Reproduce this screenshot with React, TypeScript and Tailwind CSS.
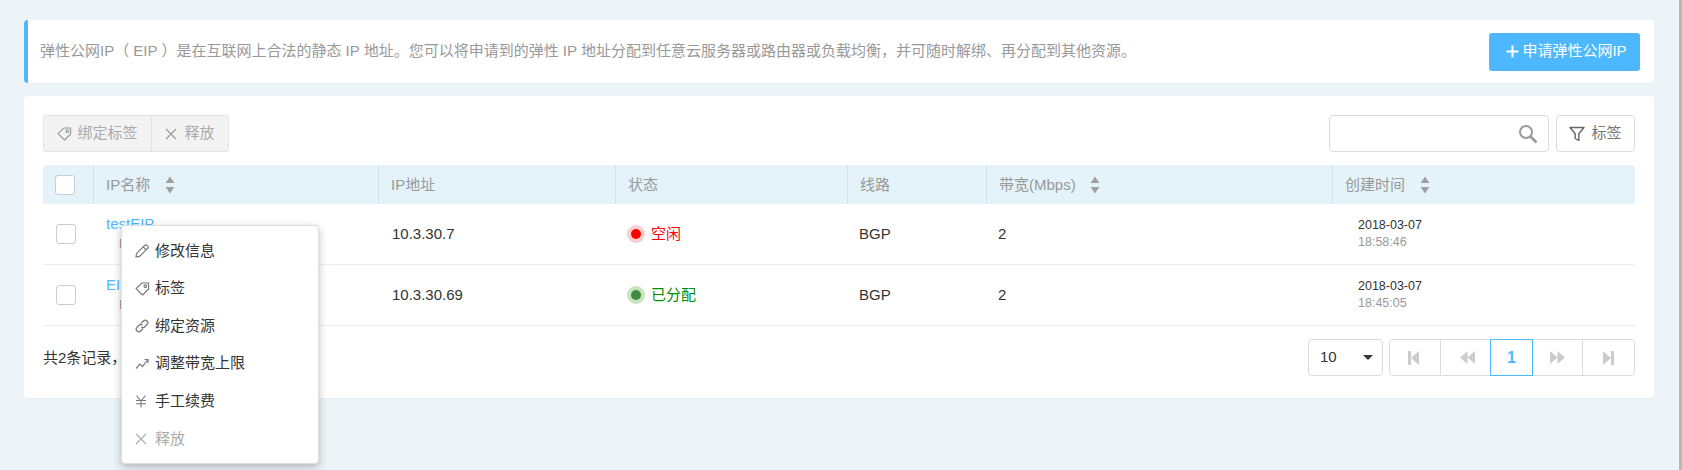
import React from "react";

const font = "font-['Liberation_Sans','Noto_Sans_CJK_SC',sans-serif]";

function Sort() {
  return (
    <svg width="10" height="18" viewBox="0 0 10 18" className="ml-[14.5px] shrink-0">
      <path d="M5 0.5L9.4 7H0.6Z M5 17.5L0.6 11H9.4Z" fill="#a0a0a0" />
    </svg>
  );
}

function Tag({ c = "#888" }: { c?: string }) {
  return (
    <svg width="15" height="15" viewBox="0 0 15 15" fill="none" stroke={c} strokeWidth="1.1">
      <path d="M1 7.6L7 2H13.6V8L7.6 14Z" strokeLinejoin="round" />
      <circle cx="10.3" cy="5.2" r="1.3" />
    </svg>
  );
}

function Cross({ c = "#999" }: { c?: string }) {
  return (
    <svg width="12" height="12" viewBox="0 0 12 12" fill="none" stroke={c} strokeWidth="1.1">
      <path d="M1 1L11 11M11 1L1 11" />
    </svg>
  );
}

const menu: { label: string; icon: React.ReactNode; off?: boolean }[] = [
  {
    label: "修改信息",
    icon: (
      <svg width="14" height="14" viewBox="0 0 14 14" fill="none" stroke="#777" strokeWidth="1.2">
        <path d="M1 13L1.6 9.4L9.4 1.6A1.5 1.5 0 0 1 12.4 4.6L4.6 12.4Z" strokeLinejoin="round" />
        <path d="M8.2 2.8L11.2 5.8" />
      </svg>
    ),
  },
  { label: "标签", icon: <Tag c="#777" /> },
  {
    label: "绑定资源",
    icon: (
      <svg width="14" height="14" viewBox="0 0 14 14" fill="none" stroke="#777" strokeWidth="1.3">
        <path d="M6 4.4L8.4 2A2.5 2.5 0 0 1 12 5.6L9.6 8A2.5 2.5 0 0 1 6.4 8" />
        <path d="M8 9.6L5.6 12A2.5 2.5 0 0 1 2 8.4L4.4 6A2.5 2.5 0 0 1 7.6 6" />
      </svg>
    ),
  },
  {
    label: "调整带宽上限",
    icon: (
      <svg width="14" height="12" viewBox="0 0 14 12" fill="none" stroke="#777" strokeWidth="1.2">
        <path d="M1 10.5L5 6L7.5 8.5L12.5 2" />
        <path d="M9.5 1.5H13V5" />
      </svg>
    ),
  },
  {
    label: "手工续费",
    icon: (
      <svg width="12" height="13" viewBox="0 0 12 13" fill="none" stroke="#777" strokeWidth="1.1">
        <path d="M1.5 0.5L6 6L10.5 0.5M6 6V12.5M1 5.5H11M1 8.8H11" />
      </svg>
    ),
  },
  { label: "释放", icon: <Cross c="#aaa" />, off: true },
];

const cols = [
  { label: "IP名称", sort: true },
  { label: "IP地址" },
  { label: "状态" },
  { label: "线路" },
  { label: "带宽(Mbps)", sort: true },
  { label: "创建时间", sort: true },
];

const rows = [
  { name: "testEIP", sub: "EIP-01", ip: "10.3.30.7", status: "空闲", on: false, time: "18:58:46" },
  { name: "EIP", sub: "EIP-02", ip: "10.3.30.69", status: "已分配", on: true, time: "18:45:05" },
];

const grid = "grid grid-cols-[50px_285px_237px_232px_139px_346px_303px]";

export default function App() {
  return (
    <div className={`${font} relative h-[470px] w-full overflow-hidden bg-[#ecf4f8] pl-[24px] pr-[28px] pt-[20px] text-[15px] text-[#333]`}>
      <div className="flex h-[63px] items-center justify-between rounded-[4px] border-l-[4px] border-[#4db8ff] bg-white pl-[12px] pr-[14px] shadow-[0_1px_1px_rgba(0,0,0,0.03)]">
        <p className="text-[#999]">弹性公网IP（ EIP ）是在互联网上合法的静态 IP 地址。您可以将申请到的弹性 IP 地址分配到任意云服务器或路由器或负载均衡，并可随时解绑、再分配到其他资源。</p>
        <button className="flex h-[38px] w-[151px] items-center justify-center gap-[3px] rounded-[3px] bg-[#4db8ff] pl-[4px] text-white">
          <svg width="13" height="13" viewBox="0 0 13 13" stroke="#fff" strokeWidth="2">
            <path d="M6.5 0.5V12.5M0.5 6.5H12.5" />
          </svg>
          申请弹性公网IP
        </button>
      </div>

      <div className="mt-[13px] h-[302px] rounded-[4px] bg-white px-[19px] pt-[19px] shadow-[0_1px_1px_rgba(0,0,0,0.03)]">
        <div className="flex h-[37px] items-center justify-between">
          <div className="flex h-[37px] rounded-[3px] border border-[#e3e3e3] bg-[#f3f3f3] text-[#aaa]">
            <div className="flex w-[108px] items-center justify-center gap-[5px] border-r border-[#e3e3e3]">
              <Tag c="#999" />
              绑定标签
            </div>
            <div className="flex w-[76px] items-center justify-center gap-[7px]">
              <Cross />
              释放
            </div>
          </div>
          <div className="flex gap-[7px]">
            <div className="flex h-[37px] w-[220px] items-center justify-end rounded-[4px] border border-[#dcdcdc] pr-[10px]">
              <svg width="20" height="20" viewBox="0 0 20 20" fill="none" stroke="#999" strokeWidth="2">
                <circle cx="8" cy="8" r="6" />
                <path d="M12.5 12.5L18.5 18.5" strokeWidth="2.6" />
              </svg>
            </div>
            <div className="flex h-[37px] w-[79px] items-center justify-center gap-[6px] rounded-[4px] border border-[#dcdcdc] text-[#777]">
              <svg width="16" height="16" viewBox="0 0 16 16" fill="none" stroke="#666" strokeWidth="1.4">
                <path d="M1 1.5H15L9.8 7.8V14.5L6.2 12.5V7.8Z" strokeLinejoin="round" />
              </svg>
              标签
            </div>
          </div>
        </div>

        <div className={`${grid} mt-[13px] h-[39px] rounded-t-[4px] bg-[#e4f3f9] text-[#999]`}>
          <div className="flex items-center pl-[12px]">
            <span className="h-[20px] w-[20px] rounded-[3px] border border-[#ccc] bg-white" />
          </div>
          {cols.map((c) => (
            <div key={c.label} className="flex items-center border-l border-[#cfe2ec] pl-[12px]">
              <span className="pt-[2px]">{c.label}</span>
              {c.sort && <Sort />}
            </div>
          ))}
        </div>

        {rows.map((r) => (
          <div key={r.ip} className={`${grid} h-[61px] border-b border-[#e9eef1] text-[#333]`}>
            <div className="flex items-center pl-[13px]">
              <span className="h-[20px] w-[20px] rounded-[3px] border border-[#ccc] bg-white" />
            </div>
            <div className="pl-[13px] pt-[10px] leading-[20px] text-[#4db8ff]">
              {r.name}
              <div className="pl-[13px] text-[12px] leading-[20px] text-[#999]">{r.sub}</div>
            </div>
            <div className="flex items-center pl-[14px]">{r.ip}</div>
            <div className={`flex items-center gap-[6px] pl-[12px] ${r.on ? "text-[#008f00]" : "text-[#f00]"}`}>
              <span className={`flex h-[18px] w-[18px] items-center justify-center rounded-full ${r.on ? "bg-[#c6e5bd]" : "bg-[#f8cfcf]"}`}>
                <span className={`h-[10px] w-[10px] rounded-full ${r.on ? "bg-[#418a43]" : "bg-[#f00]"}`} />
              </span>
              {r.status}
            </div>
            <div className="flex items-center pl-[12px]">BGP</div>
            <div className="flex items-center pl-[12px]">2</div>
            <div className="pl-[26px] pt-[13px] text-[12.5px] leading-[17px]">
              <div>2018-03-07</div>
              <div className="text-[#999]">{r.time}</div>
            </div>
          </div>
        ))}

        <div className="mt-[13px] flex h-[37px] items-center justify-between">
          <span className="pt-[2px]">共2条记录，</span>
          <div className="flex gap-[6px]">
            <div className="flex h-[37px] w-[75px] items-center justify-between rounded-[4px] border border-[#dcdcdc] pl-[11px] pr-[9px]">
              10
              <span className="h-0 w-0 border-x-[5px] border-t-[5px] border-x-transparent border-t-[#333]" />
            </div>
            <div className="flex h-[37px] w-[246px] rounded-[4px] border border-[#dcdcdc]">
              <div className="flex w-[51px] items-center justify-center border-r border-[#dcdcdc] pr-[4px]">
                <svg width="11" height="14" viewBox="0 0 11 14" fill="#ccc"><path d="M0 0H3V14H0ZM3 7L11 0V14Z" /></svg>
              </div>
              <div className="flex w-[49px] items-center justify-center pl-[4px]">
                <svg width="15" height="13" viewBox="0 0 15 13" fill="#ccc"><path d="M0 6.5L7.5 0V13ZM7.5 6.5L15 0V13Z" /></svg>
              </div>
              <div className="-my-px flex w-[43px] items-center justify-center border border-[#4db8ff] text-[16px] font-bold text-[#4db8ff]">1</div>
              <div className="flex w-[50px] items-center justify-center border-r border-[#dcdcdc]">
                <svg width="15" height="13" viewBox="0 0 15 13" fill="#ccc"><path d="M0 0L7.5 6.5L0 13ZM7.5 0L15 6.5L7.5 13Z" /></svg>
              </div>
              <div className="flex flex-1 items-center justify-center">
                <svg width="11" height="14" viewBox="0 0 11 14" fill="#ccc"><path d="M0 0L8 7L0 14ZM8 0H11V14H8Z" /></svg>
              </div>
            </div>
          </div>
        </div>
      </div>

      <div className="absolute left-[121px] top-[225px] h-[239px] w-[198px] rounded-[4px] border border-[#e0e0e0] bg-white pl-[13px] pt-[6px] shadow-[0_3px_8px_rgba(0,0,0,0.25)]">
        {menu.map((m) => (
          <div key={m.label} className={`flex h-[37.6px] items-center ${m.off ? "text-[#aaa]" : "text-[#333]"}`}>
            <span className="flex w-[20px] shrink-0 items-center">{m.icon}</span>
            {m.label}
          </div>
        ))}
      </div>

      <div className="absolute right-0 top-0 h-full w-[3px] bg-[#b8b8b8]" />
    </div>
  );
}
